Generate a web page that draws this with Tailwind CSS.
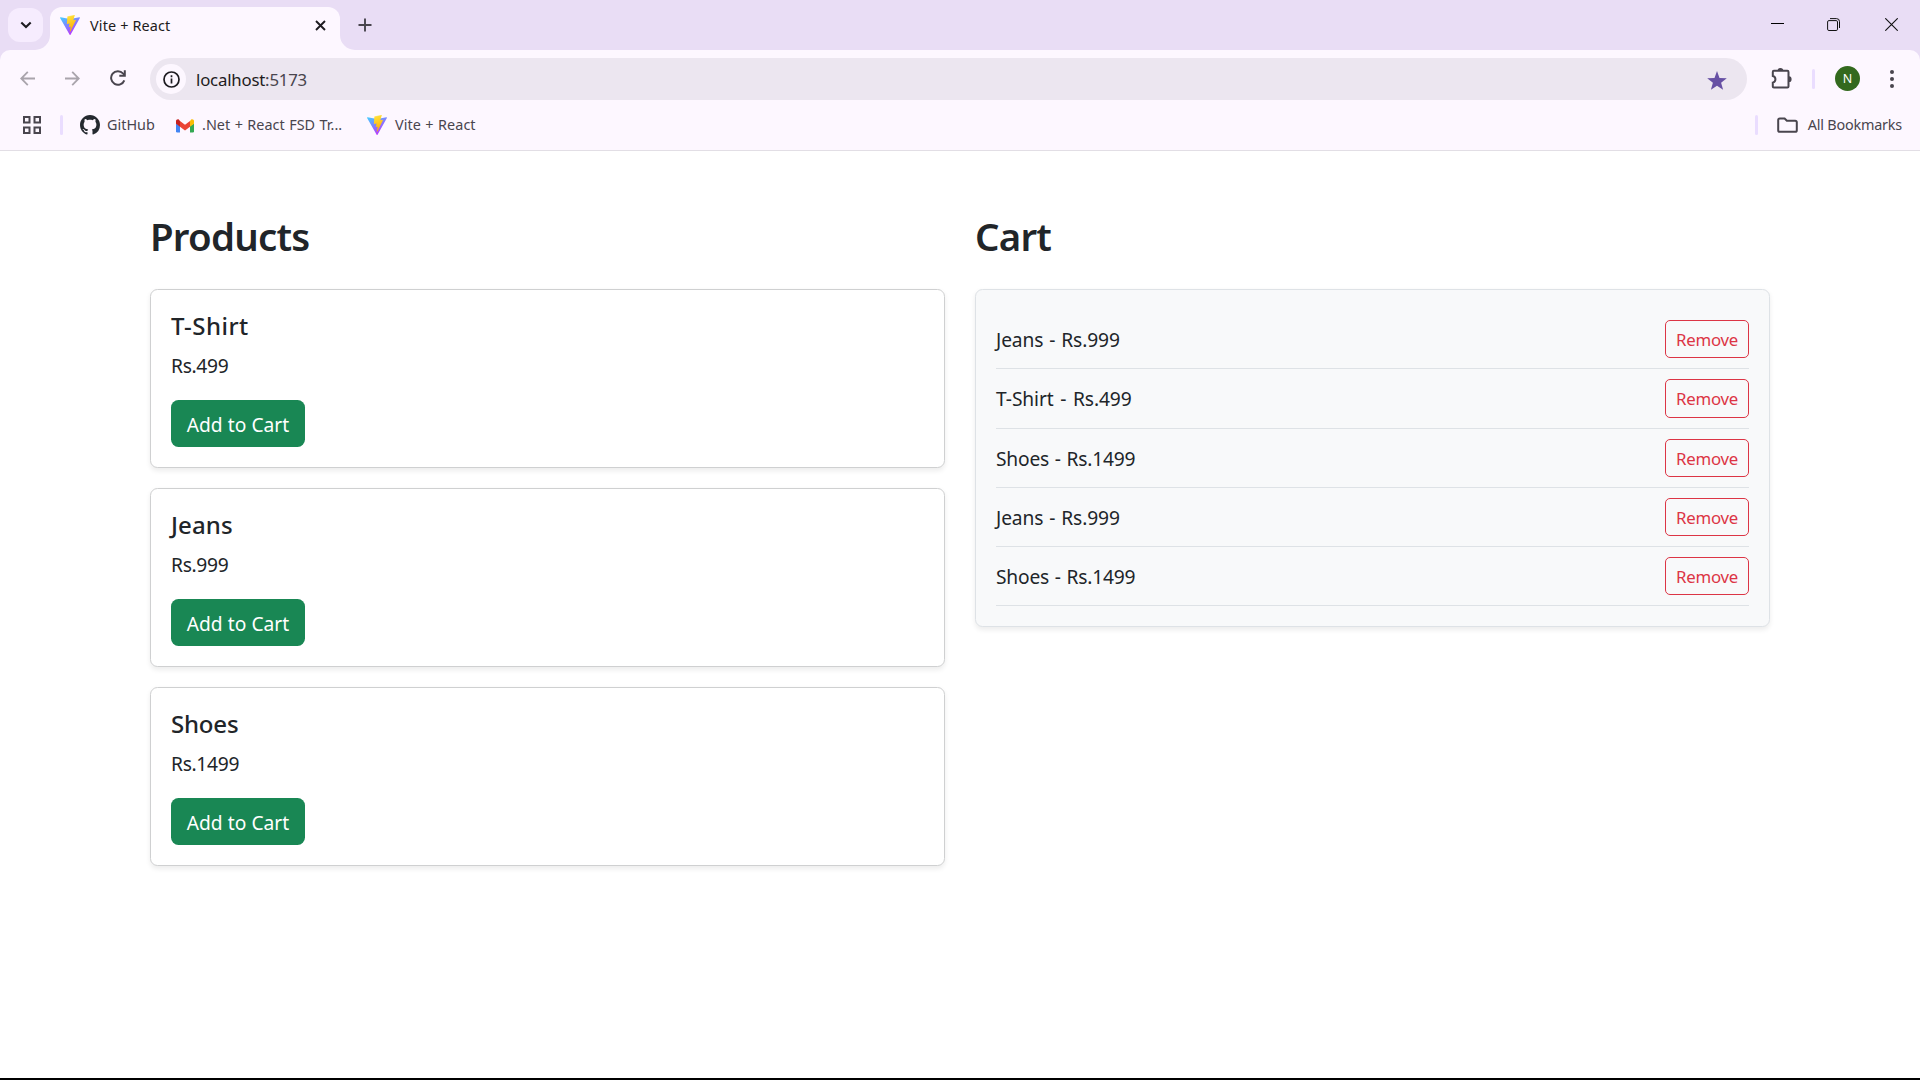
<!DOCTYPE html>
<html lang="en">
<head>
<meta charset="utf-8">
<title>Vite + React</title>
<script src="https://cdn.jsdelivr.net/npm/@tailwindcss/browser@4"></script>
</head>
<body class="flex h-[1080px] w-[1920px] flex-col overflow-hidden bg-white font-['Noto_Sans',sans-serif] text-[#212529]">

<svg class="absolute h-0 w-0">
  <defs>
    <linearGradient id="va" x1="0" y1="0" x2="0.6" y2="1"><stop offset="0" stop-color="#41d1ff"/><stop offset="1" stop-color="#bd34fe"/></linearGradient>
    <linearGradient id="vb" x1="0.4" y1="0" x2="0.6" y2="1"><stop offset="0" stop-color="#ffea83"/><stop offset=".1" stop-color="#ffdd35"/><stop offset="1" stop-color="#ffa800"/></linearGradient>
  </defs>
  <symbol id="vite" viewBox="0 0 256 257">
    <path fill="url(#va)" d="M255.153 37.938 134.897 252.976c-2.483 4.44-8.862 4.466-11.382.048L.875 37.958c-2.746-4.814 1.371-10.646 6.827-9.67l120.385 21.517a6.537 6.537 0 0 0 2.322-.004l117.867-21.483c5.438-.991 9.574 4.796 6.877 9.62Z"/>
    <path fill="url(#vb)" d="M185.432.063 96.44 17.501a3.268 3.268 0 0 0-2.634 3.014l-5.474 92.456a3.268 3.268 0 0 0 3.997 3.378l24.777-5.718c2.318-.535 4.413 1.507 3.936 3.838l-7.361 36.047c-.495 2.426 1.782 4.5 4.151 3.78l15.304-4.649c2.372-.72 4.652 1.36 4.15 3.788l-11.698 56.621c-.732 3.542 3.979 5.473 5.943 2.437l1.313-2.028 72.516-144.72c1.215-2.423-.88-5.186-3.54-4.672l-25.505 4.922c-2.396.462-4.435-1.77-3.759-4.114l16.646-57.705c.677-2.35-1.37-4.583-3.769-4.113Z"/>
  </symbol>
</svg>

<!-- Browser window -->
<header class="flex h-[151px] shrink-0 flex-col bg-[#e9ddf5]">
  <!-- Tab strip -->
  <div class="flex h-[50px] shrink-0">
    <button class="mt-2 ml-2 flex h-[34px] w-[35px] items-center justify-center rounded-[12px] bg-[#f6ecfe]">
      <svg class="h-[8px] w-[12px]" viewBox="0 0 12 8" fill="none" stroke="#1d1b20" stroke-width="2.1"><path d="M1.3 1.5 6 6l4.700-4.500"/></svg>
    </button>
    <svg class="mt-[35px] -ml-[8px] h-[15px] w-[15px]" viewBox="0 0 15 15"><path fill="#fdf7ff" d="M15 0v15H0A15 15 0 0 0 15 0Z"/></svg>
    <div class="mt-[7px] flex h-[43px] w-[290px] items-center rounded-t-[12px] bg-[#fdf7ff] pr-[14px] pb-[7px] pl-[10px]">
      <svg class="h-5 w-5"><use href="#vite"/></svg>
      <span class="ml-[10px] pt-[2px] text-[14.4px] tracking-[0.15px] whitespace-nowrap text-[#1d1b20]">Vite + React</span>
      <svg class="ml-auto h-[11px] w-[11px]" viewBox="0 0 11 11" stroke="#1d1b20" stroke-width="1.9"><path d="m1 1 9 9M10 1l-9 9"/></svg>
    </div>
    <svg class="mt-[35px] h-[15px] w-[15px]" viewBox="0 0 15 15"><path fill="#fdf7ff" d="M0 0v15h15A15 15 0 0 1 0 0Z"/></svg>
    <svg class="mt-[18px] ml-[3px] h-[14px] w-[14px]" viewBox="0 0 14 14" stroke="#49454e" stroke-width="1.9"><path d="M7 .5v13M.5 7h13"/></svg>
    <div class="ml-auto flex">
      <svg class="mt-[23px] mr-[43px] h-px w-[13px]" viewBox="0 0 13 1"><path fill="#000" d="M0 0h13v1H0z"/></svg>
      <svg class="mt-[18px] mr-[45px] h-[13px] w-[13px]" viewBox="0 0 13 13" fill="none" stroke="#111"><rect x=".6" y="2.600" width="9.900" height="9.900" rx="1.300"/><path d="M3 .6h6.500a3 3 0 0 1 3 3V10"/></svg>
      <svg class="mt-[18px] mr-[22px] h-[13px] w-[13px]" viewBox="0 0 13 13" stroke="#111" stroke-width="1.100"><path d="m.3.3 12.400 12.400M12.700.3.3 12.700"/></svg>
    </div>
  </div>

  <!-- Toolbar -->
  <div class="flex h-[101px] flex-col rounded-t-[10px] border-b border-[#e2dee5] bg-[#fdf7ff]">
    <div class="flex h-[58px] items-center">
      <svg class="-mt-px ml-5 h-[15px] w-[15px]" viewBox="0 0 15 15" fill="none" stroke="#a9a4ac" stroke-width="1.800"><path d="M15 7.500H1.500M7.800.8 1.200 7.500l6.600 6.700"/></svg>
      <svg class="-mt-px ml-[30px] h-[15px] w-[15px]" viewBox="0 0 15 15" fill="none" stroke="#a9a4ac" stroke-width="1.800"><path d="M0 7.500h13.500M7.200.8l6.600 6.700-6.600 6.700"/></svg>
      <svg class="-mt-[2px] ml-[30px] h-[16px] w-[16px]" viewBox="0 0 16 16" fill="none" stroke="#49454e" stroke-width="2"><path d="M14.300 10.300A6.800 6.800 0 1 1 13 3.400l1.500 1.600"/><path d="M14.800.3v5.500H9.300"/></svg>
      <div class="ml-[24px] flex h-[42px] w-[1597px] items-center rounded-full bg-[#ece6f0] pr-5 pl-[6px]">
        <span class="flex h-[30px] w-[30px] items-center justify-center rounded-full bg-[#fdf7ff]">
          <svg class="h-[17px] w-[17px]" viewBox="0 0 17 17" fill="none" stroke="#1d1b20" stroke-width="1.700"><circle cx="8.500" cy="8.500" r="7.500"/><path d="M8.500 7.500v5M8.500 4.300v1.900"/></svg>
        </span>
        <span class="ml-[10px] pt-[2px] text-[16.8px] tracking-[-0.2px] text-[#1d1b20]">localhost<span class="text-[#49454e]">:5173</span></span>
        <svg class="mt-[3px] ml-auto h-[19px] w-[20px]" viewBox="0 0 20 19"><path fill="#6750a4" d="m10 0 2.500 6.900 7.300.3-5.700 4.500 2 7.100L10 14.700l-6.100 4.100 2-7.100L.2 7.200l7.300-.3z"/></svg>
      </div>
      <svg class="-mt-px ml-[24px] h-[21px] w-[21px]" viewBox="0 0 21 21"><path fill="none" stroke="#49454e" stroke-width="2" d="M2.800 2.800h13.600q1.100 0 1.100 1.100v14.500q0 1.100-1.100 1.100H2.900q-1.100 0-1.100-1.100v-3.800c3.500-.8 3.500-5.800 0-6.600V3.900q0-1.100 1-1.100Z"/><path fill="#49454e" d="M6.500 2.500a2.900 2.500 0 0 1 5.800 0ZM18 8.300a2.600 2.900 0 0 1 0 5.800Z"/></svg>
      <span class="ml-[20px] h-5 w-[3px] rounded-full bg-[#eaddff]"></span>
      <span class="-mt-px ml-[20px] flex h-[25px] w-[25px] items-center justify-center rounded-full bg-[#33691e] pt-px text-[12.500px] text-white">N</span>
      <svg class="-mt-px ml-[30px] h-[18px] w-[4px]" viewBox="0 0 4 18" fill="#49454e"><circle cx="2" cy="2" r="2"/><circle cx="2" cy="9" r="2"/><circle cx="2" cy="16" r="2"/></svg>
    </div>

    <!-- Bookmarks -->
    <div class="flex h-[34px] items-center text-[14.400px] whitespace-nowrap text-[#49454e]">
      <svg class="ml-[23px] h-[18px] w-[18px]" viewBox="0 0 18 18" fill="none" stroke="#49454e" stroke-width="2"><path d="M1 1h5.500v5.500H1zM11.500 1H17v5.500h-5.500zM1 11.500h5.500V17H1zM11.500 11.500H17V17h-5.500z"/></svg>
      <span class="ml-[19px] h-5 w-[3px] rounded-full bg-[#eaddff]"></span>
      <svg class="ml-[17px] h-5 w-5" viewBox="0 0 16 16" fill="#24292f"><path d="M8 0C3.580 0 0 3.580 0 8c0 3.540 2.290 6.530 5.470 7.590.4.070.55-.17.55-.38 0-.19-.01-.82-.01-1.490-2.010.37-2.530-.49-2.690-.94-.09-.23-.48-.94-.82-1.130-.28-.15-.68-.52-.01-.53.63-.01 1.080.58 1.230.82.72 1.210 1.870.87 2.330.66.07-.52.28-.87.51-1.070-1.780-.2-3.640-.89-3.640-3.950 0-.87.31-1.590.82-2.150-.08-.2-.36-1.020.08-2.120 0 0 .67-.21 2.200.82.64-.18 1.320-.27 2-.27s1.360.09 2 .27c1.530-1.040 2.200-.82 2.200-.82.44 1.100.16 1.920.08 2.120.51.56.82 1.270.82 2.150 0 3.070-1.870 3.750-3.650 3.950.29.25.54.73.54 1.480 0 1.070-.01 1.930-.01 2.200 0 .21.15.46.55.38A8.010 8.010 0 0 0 16 8c0-4.420-3.580-8-8-8Z"/></svg>
      <span class="ml-[7px] w-[68px]">GitHub</span>
      <svg class="h-[15px] w-[20px]" viewBox="0 0 20 15"><path fill="#4285f4" d="M1 5.500 5 8v6.500H2.200A1.200 1.200 0 0 1 1 13.300z"/><path fill="#34a853" d="M15 8l4-2.500v7.800a1.200 1.200 0 0 1-1.200 1.200H15z"/><path fill="#fbbc04" d="M15 3l1-1.300c1.200-.9 3-.1 3 1.400v2.600L15 8.700z"/><path fill="#ea4335" d="M5 8.700V3l5 3.700L15 3v5.700l-5 3.700z"/><path fill="#c5221f" d="M1 3.100C1 1.600 2.800.8 4 1.700L5 3v5.700L1 5.700z"/></svg>
      <span class="ml-[7px] w-[165px] tracking-[0.02px] [word-spacing:0.7px]">.Net + React FSD Tr...</span>
      <svg class="h-5 w-5"><use href="#vite"/></svg>
      <span class="ml-[8px] tracking-[0.05px] [word-spacing:0.7px]">Vite + React</span>
      <span class="ml-auto h-5 w-[3px] rounded-full bg-[#eaddff]"></span>
      <svg class="ml-[19px] h-4 w-[21px]" viewBox="0 0 21 16"><path fill="none" stroke="#49454e" stroke-width="2" d="M2.800 1.500h4.800l2.300 2.300h8.300q1.600 0 1.600 1.500v7.900q0 1.600-1.600 1.600H2.800q-1.600 0-1.600-1.600V3q0-1.500 1.600-1.500Z"/></svg>
      <span class="mr-[18px] ml-[10px] tracking-[-0.2px]">All Bookmarks</span>
    </div>
  </div>
</header>

<!-- Shop -->
<main class="grid grow grid-cols-2 items-start gap-[30px] px-[150px] pt-[61px] text-[19.200px]">
  <section>
    <h1 class="mb-[29px] h-12 text-[38.400px] leading-[48px] font-semibold tracking-[-0.750px]">Products</h1>
    <div class="flex flex-col gap-5">
      <article class="flex h-[179px] flex-col items-start rounded-[7.500px] border border-[#cfd0d1] bg-white p-5 shadow-[0_2.5px_5px_rgba(0,0,0,0.075)]">
        <h5 class="mb-[7px] text-[24px] leading-[32px] font-medium tracking-[0.500px]">T-Shirt</h5>
        <p class="mb-[18px] leading-[33px] tracking-[-0.3px]">Rs.499</p>
        <button class="flex h-[47px] w-[134px] items-center justify-center rounded-[7.500px] bg-[#198754] pt-[3px] tracking-[0.05px] text-white">Add to Cart</button>
      </article>
      <article class="flex h-[179px] flex-col items-start rounded-[7.500px] border border-[#cfd0d1] bg-white p-5 shadow-[0_2.5px_5px_rgba(0,0,0,0.075)]">
        <h5 class="mb-[7px] text-[24px] leading-[32px] font-medium tracking-[0.1px]">Jeans</h5>
        <p class="mb-[18px] leading-[33px] tracking-[-0.3px]">Rs.999</p>
        <button class="flex h-[47px] w-[134px] items-center justify-center rounded-[7.500px] bg-[#198754] pt-[3px] tracking-[0.05px] text-white">Add to Cart</button>
      </article>
      <article class="flex h-[179px] flex-col items-start rounded-[7.500px] border border-[#cfd0d1] bg-white p-5 shadow-[0_2.5px_5px_rgba(0,0,0,0.075)]">
        <h5 class="mb-[7px] text-[24px] leading-[32px] font-medium tracking-[-0.2px]">Shoes</h5>
        <p class="mb-[18px] leading-[33px] tracking-[-0.3px]">Rs.1499</p>
        <button class="flex h-[47px] w-[134px] items-center justify-center rounded-[7.500px] bg-[#198754] pt-[3px] tracking-[0.05px] text-white">Add to Cart</button>
      </article>
    </div>
  </section>

  <section>
    <h1 class="mb-[29px] h-12 text-[38.400px] leading-[48px] font-semibold tracking-[-0.750px]">Cart</h1>
    <ul class="rounded-[7.500px] border border-[#dee2e6] bg-[#f8f9fa] p-5 shadow-[0_2.5px_5px_rgba(0,0,0,0.075)]">
      <li class="flex h-[59px] justify-between border-b border-[#dee2e6] py-[10px] leading-[40px] tracking-[-0.100px] [word-spacing:1px]">Jeans - Rs.999<button class="flex w-[84px] items-center justify-center rounded-[5px] border border-[#dc3545] pt-[2px] text-[16.800px] leading-none tracking-[-0.2px] text-[#dc3545]">Remove</button></li>
      <li class="flex h-[60px] justify-between border-b border-[#dee2e6] py-[10px] leading-[40px] tracking-[-0.100px] [word-spacing:1.800px]">T-Shirt - Rs.499<button class="flex w-[84px] items-center justify-center rounded-[5px] border border-[#dc3545] pt-[2px] text-[16.800px] leading-none tracking-[-0.2px] text-[#dc3545]">Remove</button></li>
      <li class="flex h-[59px] justify-between border-b border-[#dee2e6] py-[10px] leading-[40px] tracking-[-0.200px] [word-spacing:1px]">Shoes - Rs.1499<button class="flex w-[84px] items-center justify-center rounded-[5px] border border-[#dc3545] pt-[2px] text-[16.800px] leading-none tracking-[-0.2px] text-[#dc3545]">Remove</button></li>
      <li class="flex h-[59px] justify-between border-b border-[#dee2e6] py-[10px] leading-[40px] tracking-[-0.100px] [word-spacing:1px]">Jeans - Rs.999<button class="flex w-[84px] items-center justify-center rounded-[5px] border border-[#dc3545] pt-[2px] text-[16.800px] leading-none tracking-[-0.2px] text-[#dc3545]">Remove</button></li>
      <li class="flex h-[59px] justify-between border-b border-[#dee2e6] py-[10px] leading-[40px] tracking-[-0.200px] [word-spacing:1px]">Shoes - Rs.1499<button class="flex w-[84px] items-center justify-center rounded-[5px] border border-[#dc3545] pt-[2px] text-[16.800px] leading-none tracking-[-0.2px] text-[#dc3545]">Remove</button></li>
    </ul>
  </section>
</main>
<div class="h-[2px] shrink-0 bg-black"></div>
</body>
</html>
